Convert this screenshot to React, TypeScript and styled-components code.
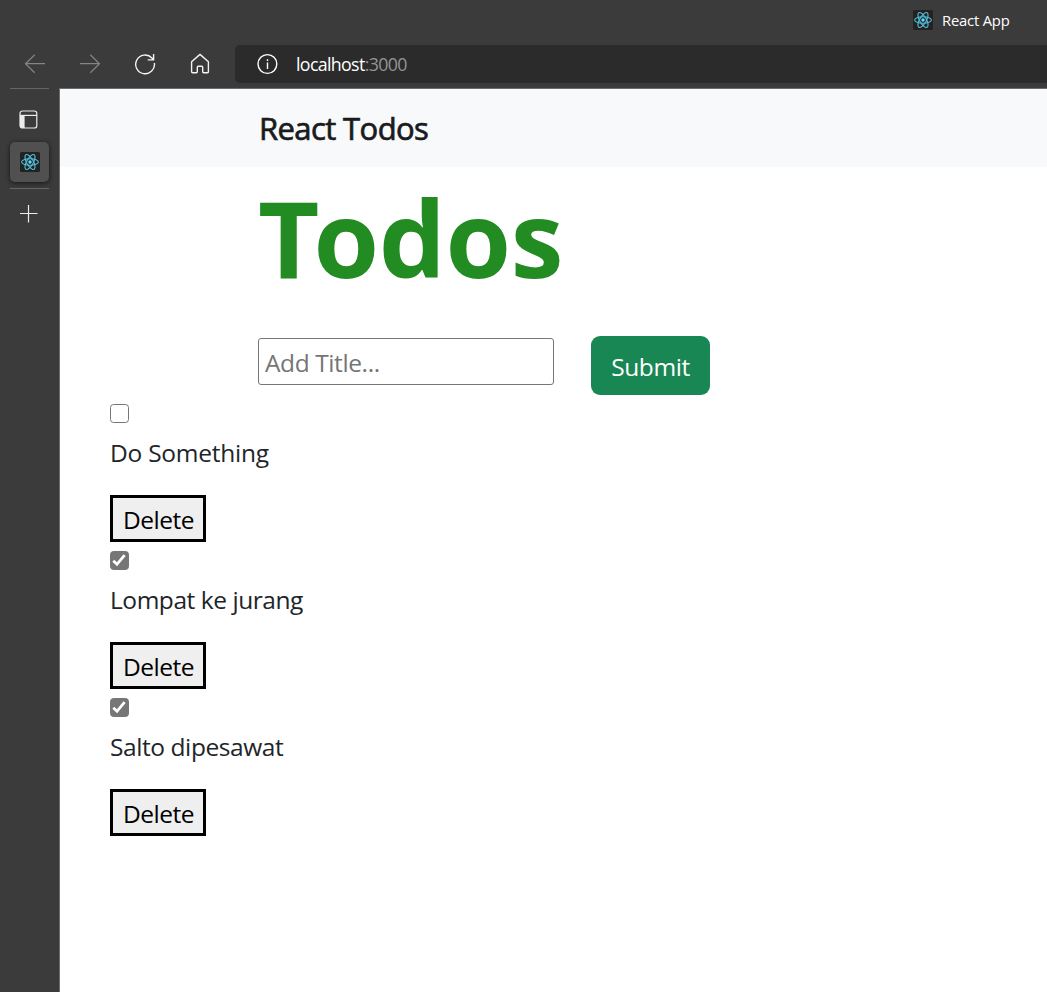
import React from "react";
import styled, { createGlobalStyle } from "styled-components";

const GlobalStyle = createGlobalStyle`
  *, *::before, *::after { box-sizing: border-box; }
  body {
    margin: 0;
    overflow: hidden;
    background: #3b3b3b;
    font-family: "Open Sans", "Noto Sans", sans-serif;
  }
`;

const Browser = styled.div`
  display: flex;
  flex-direction: column;
  height: 992px;
`;

const TabStrip = styled.header`
  display: flex;
  justify-content: flex-end;
  align-items: center;
  height: 40px;
  padding-right: 37px;
`;

const TabTitle = styled.span`
  width: 68px;
  margin-left: 9px;
  color: #fff;
  font-size: 14.8px;
  line-height: 20px;
  letter-spacing: -0.2px;
  white-space: nowrap;
`;

const Toolbar = styled.nav`
  display: flex;
  height: 48px;
  padding: 5px 0 5px 24px;
`;

const NavButton = styled.span<{ $dim?: boolean }>`
  display: flex;
  align-items: center;
  width: 55px;
  padding-bottom: 1px;
  color: ${(p) => (p.$dim ? "#858585" : "#f4f4f4")};
`;

const AddressBar = styled.div`
  display: flex;
  flex: 1;
  align-items: center;
  margin-left: -9px;
  padding: 0 0 1px 21px;
  background: #2b2b2b;
  border-radius: 5px 0 0 5px;
  color: #fff;
`;

const Url = styled.span`
  margin-left: 18px;
  font-size: 17.8px;
  line-height: 24px;
  letter-spacing: -0.65px;
`;

const Port = styled.span`
  color: #949494;
`;

const Body = styled.div`
  display: flex;
  flex: 1;
`;

const Sidebar = styled.aside`
  display: flex;
  flex-direction: column;
  align-items: center;
  width: 59px;
`;

const Rule = styled.hr`
  width: 39px;
  height: 1px;
  margin: 0;
  border: 0;
  background: #656565;
`;

const SideSlot = styled.div<{ $height: number; $drop?: number }>`
  display: flex;
  align-items: center;
  justify-content: center;
  height: ${(p) => p.$height}px;
  padding: ${(p) => p.$drop ?? 0}px 2px 0 0;
  color: #ececec;
`;

const ActiveTab = styled.div`
  display: flex;
  align-items: center;
  justify-content: center;
  width: 39px;
  height: 40px;
  margin-bottom: 6px;
  border-radius: 5px;
  background: #505050;
  box-shadow: 0 1px 5px rgba(0, 0, 0, 0.65);
`;

const Page = styled.main`
  flex: 1;
  border-top: 1px solid #6c6c6c;
  border-left: 1px solid #6c6c6c;
  background: #fff;
`;

const Navbar = styled.div`
  height: 78px;
  padding-left: 199px;
  background: #f8f9fb;
`;

const Brand = styled.span`
  color: #1a1b1c;
  font-size: 31px;
  line-height: 79px;
  letter-spacing: -0.6px;
  -webkit-text-stroke: 0.7px #1a1b1c;
`;

const Title = styled.h1`
  margin: 7px 0 36px 198px;
  color: #228b22;
  font-size: 106px;
  font-weight: 700;
  line-height: 126px;
  letter-spacing: -0.3px;
`;

const TitleInitial = styled.span`
  letter-spacing: -6px;
`;

const Form = styled.form`
  display: flex;
  align-items: flex-start;
  gap: 37px;
  height: 59px;
  padding-left: 198px;
`;

const TitleInput = styled.input`
  width: 296px;
  height: 47px;
  margin-top: 2px;
  padding: 4px 6px 2px;
  border: 1px solid #767676;
  border-radius: 3px;
  background: #fff;
  font: 24.5px/40px "Open Sans", sans-serif;
  letter-spacing: -0.4px;
  &::placeholder { color: #757575; opacity: 1; }
`;

const SubmitButton = styled.button`
  width: 119px;
  height: 59px;
  padding: 2px 0 0;
  border: 0;
  border-radius: 9px;
  background: #198754;
  color: #fff;
  font: 24.5px/38px "Open Sans", sans-serif;
  letter-spacing: -0.45px;
`;

const List = styled.ul`
  margin: 0;
  padding: 0 0 0 50px;
  list-style: none;
`;

const Item = styled.li`
  display: flex;
  flex-direction: column;
  align-items: flex-start;
  padding-top: 9px;
`;

const CheckBox = styled.span<{ $checked: boolean }>`
  display: flex;
  width: 19px;
  height: 19px;
  border: 1.5px solid #767676;
  border-radius: 3.5px;
  background: ${(p) => (p.$checked ? "#767676" : "#fff")};
`;

const ItemText = styled.p<{ $spacing: number }>`
  margin: 11px 0 23px;
  color: #212529;
  font-size: 24.5px;
  line-height: 38px;
  letter-spacing: ${(p) => p.$spacing}px;
`;

const DeleteButton = styled.button`
  width: 96px;
  height: 47px;
  padding: 3px 0 0 1px;
  border: 3px solid #000;
  background: #efefef;
  color: #000;
  font: 24.5px/38px "Open Sans", sans-serif;
  letter-spacing: -0.5px;
`;

const ReactLogo = () => (
  <svg width="20" height="20" viewBox="0 0 20 20" fill="none" stroke="#53c1de" strokeWidth="1.1">
    <rect width="20" height="20" rx="1.5" fill="#222" stroke="none" />
    <circle cx="10" cy="10" r="1.7" fill="#61dafb" stroke="none" />
    {[0, 60, 120].map((angle) => (
      <ellipse key={angle} cx="10" cy="10" rx="8.4" ry="3.3" transform={`rotate(${angle} 10 10)`} />
    ))}
  </svg>
);

const BackIcon = () => (
  <svg width="22" height="22" viewBox="0 0 22 22" fill="none" stroke="currentColor" strokeWidth="1.2">
    <path d="M21 10.7H1.5M10.7 1.7l-9.2 9 9.2 9" />
  </svg>
);

const ForwardIcon = () => (
  <svg width="22" height="22" viewBox="0 0 22 22" fill="none" stroke="currentColor" strokeWidth="1.2">
    <path d="M1 10.7h19.5M11.3 1.7l9.2 9-9.2 9" />
  </svg>
);

const ReloadIcon = () => (
  <svg width="22" height="22" viewBox="0 0 22 22" fill="none" stroke="currentColor" strokeWidth="1.4">
    <path d="M20.4 10A9.4 9.4 0 1 1 17.9 4.9L19.6 6.7M19.6 1v5.9h-5.9" />
  </svg>
);

const HomeIcon = () => (
  <svg width="22" height="22" viewBox="0 0 22 22" fill="none" stroke="currentColor" strokeWidth="1.4" strokeLinejoin="round">
    <path d="M11 1.4 2.6 8.7v10.1a1 1 0 0 0 1 1h3.7a1 1 0 0 0 1-1v-4.6a1 1 0 0 1 1-1h3.4a1 1 0 0 1 1 1v4.6a1 1 0 0 0 1 1h3.7a1 1 0 0 0 1-1V8.7Z" />
  </svg>
);

const InfoIcon = () => (
  <svg width="22" height="22" viewBox="0 0 22 22" fill="none" stroke="currentColor" strokeWidth="1.4">
    <circle cx="11.4" cy="11" r="9.4" />
    <path d="M11.5 9.5V16M11.5 6.2v1.7" />
  </svg>
);

const PanelIcon = () => (
  <svg width="19" height="19" viewBox="0 0 19 19" fill="none" stroke="currentColor" strokeWidth="1.2">
    <rect x="1" y="1" width="16.8" height="17" rx="2.6" />
    <path d="M1 5.4h17" />
    <path d="M1 5h4.6v13H3a2 2 0 0 1-2-2Z" fill="currentColor" stroke="none" />
  </svg>
);

const PlusIcon = () => (
  <svg width="18" height="18" viewBox="0 0 18 18" fill="none" stroke="currentColor" strokeWidth="1.2">
    <path d="M8.5 0v17.5M0 8.5h17.5" />
  </svg>
);

const CheckIcon = () => (
  <svg width="16" height="16" viewBox="0 0 16 16" fill="none" stroke="#fff" strokeWidth="2.8">
    <path d="M2.3 8.8 6 12.3 13.6 3.1" />
  </svg>
);

const todos = [
  { title: "Do Something", done: false, spacing: -0.25 },
  { title: "Lompat ke jurang", done: true, spacing: -0.45 },
  { title: "Salto dipesawat", done: true, spacing: -0.42 },
];

export default function App() {
  return (
    <Browser>
      <GlobalStyle />
      <TabStrip>
        <ReactLogo />
        <TabTitle>React App</TabTitle>
      </TabStrip>
      <Toolbar>
        <NavButton $dim><BackIcon /></NavButton>
        <NavButton $dim><ForwardIcon /></NavButton>
        <NavButton><ReloadIcon /></NavButton>
        <NavButton><HomeIcon /></NavButton>
        <AddressBar>
          <InfoIcon />
          <Url>localhost<Port>:3000</Port></Url>
        </AddressBar>
      </Toolbar>
      <Body>
        <Sidebar>
          <Rule />
          <SideSlot $height={53} $drop={7}><PanelIcon /></SideSlot>
          <ActiveTab><ReactLogo /></ActiveTab>
          <Rule />
          <SideSlot $height={50}><PlusIcon /></SideSlot>
        </Sidebar>
        <Page>
          <Navbar><Brand>React Todos</Brand></Navbar>
          <Title><TitleInitial>T</TitleInitial>odos</Title>
          <Form>
            <TitleInput placeholder="Add Title..." />
            <SubmitButton type="button">Submit</SubmitButton>
          </Form>
          <List>
            {todos.map((todo) => (
              <Item key={todo.title}>
                <CheckBox $checked={todo.done}>{todo.done && <CheckIcon />}</CheckBox>
                <ItemText $spacing={todo.spacing}>{todo.title}</ItemText>
                <DeleteButton>Delete</DeleteButton>
              </Item>
            ))}
          </List>
        </Page>
      </Body>
    </Browser>
  );
}
